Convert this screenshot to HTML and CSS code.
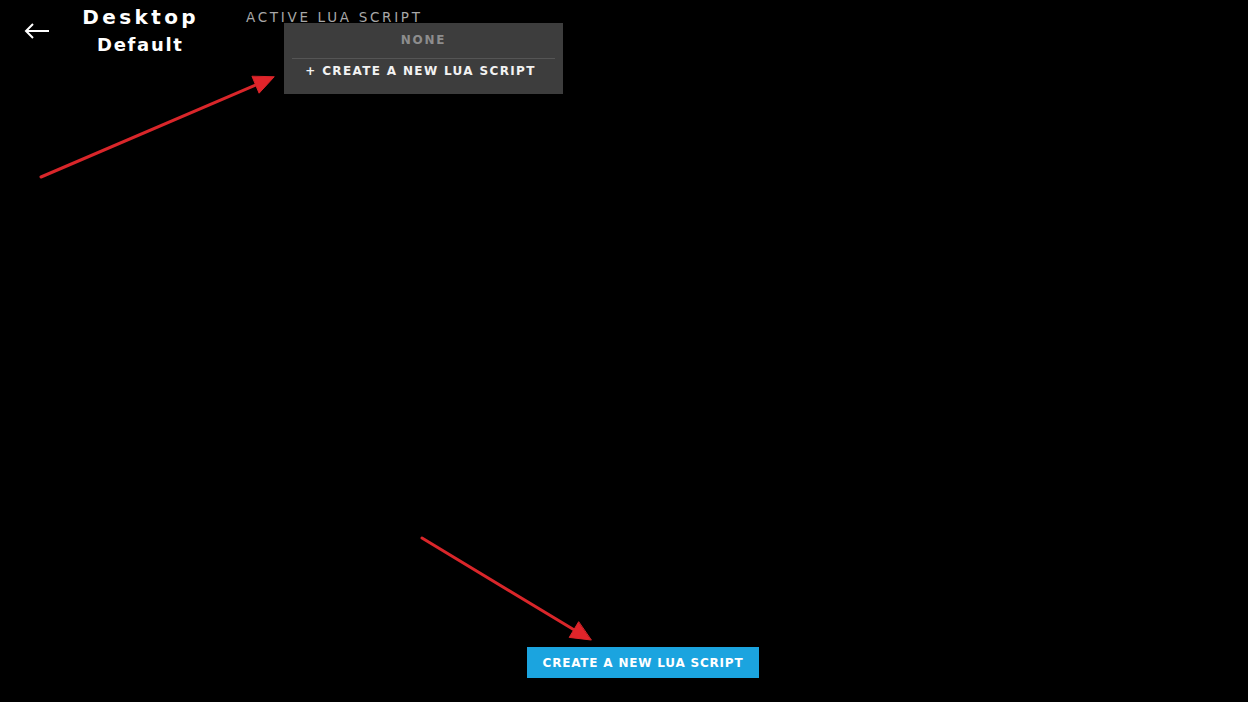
FILE: index.html
```html
<!DOCTYPE html>
<html>
<head>
<meta charset="utf-8">
<link rel="stylesheet" href="styles.css">
</head>
<body>
<div class="page">
  <header class="header">
    <button class="back" aria-label="Back">
      <svg width="26" height="16" viewBox="0 0 26 16"><path d="M25 8H2M9 1L2 8l7 7" fill="none" stroke="#fff" stroke-width="2"/></svg>
    </button>
    <div class="titles">
      <div class="title">Desktop</div>
      <div class="subtitle">Default</div>
    </div>
    <div class="script-select">
      <div class="label">ACTIVE LUA SCRIPT</div>
      <div class="menu">
        <div class="menu-item none">NONE</div>
        <div class="menu-item create">+ CREATE A NEW LUA SCRIPT</div>
      </div>
    </div>
  </header>
  <main class="content"></main>
  <footer class="footer">
    <button class="create-btn">CREATE A NEW LUA SCRIPT</button>
  </footer>
  <svg class="annotations" width="1248" height="702" viewBox="0 0 1248 702">
    <g stroke="#d9262a" stroke-width="3" fill="#e0242a" stroke-linecap="round">
      <line x1="41" y1="177" x2="258" y2="84"/>
      <polygon points="274,77 259.1,93.2 252.1,76.6" stroke-width="1" stroke-linejoin="round"/>
      <line x1="422" y1="538" x2="576" y2="631"/>
      <polygon points="591,640 569.2,637.4 578.5,622" stroke-width="1" stroke-linejoin="round"/>
    </g>
  </svg>
</div>
</body>
</html>
```
FILE: styles.css
```css
* { box-sizing: border-box; }
html, body { margin: 0; padding: 0; background: #000; }
body { font-family: "DejaVu Sans", "Lato", sans-serif; color: #fff; }
.page { position: relative; width: 1248px; height: 702px; display: flex; flex-direction: column; overflow: hidden; }
.header { display: flex; align-items: flex-start; padding: 4px 0 0 24px; height: 70px; }
.back { background: none; border: 0; padding: 0; margin-top: 19px; width: 26px; height: 16px; display: flex; cursor: pointer; }
.titles { display: flex; flex-direction: column; align-items: center; margin-left: 32px; width: 118px; }
.title { font-size: 20px; font-weight: 700; letter-spacing: 3.4px; line-height: 26px; margin-right: -3.4px; margin-left: -4px; }
.subtitle { font-size: 18px; font-weight: 700; letter-spacing: 1.7px; line-height: 22px; margin-top: 4px; margin-right: -1.7px; margin-left: -3px; }
.script-select { position: relative; margin-left: 46px; }
.label { font-size: 13.5px; color: #a8a8a8; letter-spacing: 2.7px; line-height: 18px; margin-top: 4px; white-space: nowrap; }
.menu { position: absolute; left: 38px; top: 19px; width: 279px; height: 71px; background: #3d3d3d; padding: 7px 8px 0; display: flex; flex-direction: column; }
.menu-item { font-size: 12px; font-weight: 700; text-align: center; }
.none { color: #8d8d8d; height: 29px; line-height: 20px; border-bottom: 1px solid #555; letter-spacing: 1.7px; }
.create { color: #f2f2f2; line-height: 22px; padding-top: 1px; letter-spacing: 1.35px; padding-right: 6px; }
.content { flex: 1; }
.footer { display: flex; justify-content: center; padding: 0 0 24px 38px; }
.create-btn { background: #1ba4df; border: 0; color: #fff; font-family: inherit; font-size: 12px; font-weight: 700; letter-spacing: 0.8px; width: 232px; height: 31px; padding: 0; }
.annotations { position: absolute; left: 0; top: 0; pointer-events: none; }
```
